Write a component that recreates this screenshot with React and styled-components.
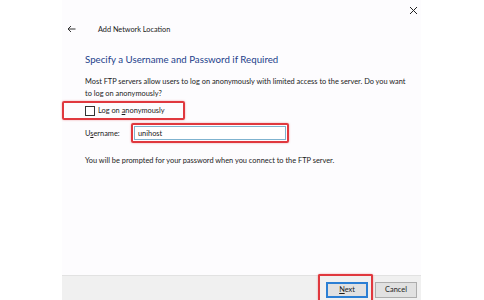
import React from 'react';
import styled, { createGlobalStyle } from 'styled-components';

const GlobalStyle = createGlobalStyle`
  html, body {
    margin: 0;
    padding: 0;
    background: #ffffff;
  }
  body {
    font-family: Lato, "Open Sans", "Liberation Sans", sans-serif;
    color: #1b1b1b;
  }
`;

const Page = styled.div`
  width: 484px;
  height: 300px;
  display: flex;
  padding-left: 62px;
  box-sizing: border-box;
  overflow: hidden;
`;

const Dialog = styled.div`
  width: 359px;
  height: 300px;
  background: #fdfcfe;
  display: flex;
  flex-direction: column;
`;

const TitleBar = styled.div`
  height: 20px;
  display: flex;
  justify-content: flex-end;
  align-items: center;
`;

const IconButton = styled.button`
  width: 16px;
  height: 16px;
  padding: 0;
  border: none;
  background: transparent;
  display: flex;
  align-items: center;
  justify-content: center;
`;

const Header = styled.div`
  height: 18px;
  display: flex;
  align-items: center;
  padding-left: 5px;
  gap: 22px;
  font-size: 7.3px;
  color: #222;
`;

const Content = styled.div`
  flex: 1;
  display: flex;
  flex-direction: column;
`;

const Heading = styled.h1`
  margin: 14px 0 0 23px;
  font-size: 9.7px;
  font-weight: 400;
  color: #233e8b;
  line-height: 14px;
`;

const Text = styled.p`
  margin: ${p => p.$top || 0}px 0 0 23px;
  font-size: 7.4px;
  line-height: 12px;
  width: 322px;
`;

const Highlight = styled.div`
  border: 2px solid #e0383e;
  border-radius: 2px;
  box-shadow: 0 0 2px rgba(224, 56, 62, 0.5);
  box-sizing: border-box;
`;

const CheckHighlight = styled(Highlight)`
  margin-top: 1px;
  width: 123px;
  height: 19px;
  display: flex;
  align-items: center;
  padding-left: 21px;
  gap: 3px;
  font-size: 7.4px;
`;

const Box = styled.span`
  width: 8px;
  height: 8px;
  border: 1px solid #333;
  background: #fff;
`;

const FieldRow = styled.div`
  margin: 3px 0 0 23px;
  display: flex;
  align-items: center;
  font-size: 7.4px;
`;

const Label = styled.span`
  width: 46px;
`;

const InputHighlight = styled(Highlight)`
  padding: 1px;
  display: flex;
`;

const Input = styled.div`
  width: 152px;
  height: 14px;
  box-sizing: border-box;
  border: 1px solid #7fb3cf;
  background: #fff;
  display: flex;
  align-items: center;
  padding-left: 3px;
  font-size: 7.4px;
`;

const Footer = styled.div`
  height: 25px;
  box-sizing: border-box;
  background: #f0f0f0;
  border-top: 1px solid #e2e2e2;
  display: flex;
  justify-content: flex-end;
  align-items: flex-end;
  padding-right: 4px;
  gap: 2px;
`;

const NextHighlight = styled(Highlight)`
  height: 26px;
  padding: 6px 3px 0 6px;
  display: flex;
  align-items: flex-start;
  border-bottom: none;
  border-radius: 2px 2px 0 0;
`;

const Button = styled.button`
  width: 42px;
  height: 16px;
  padding: 0;
  font-family: inherit;
  font-size: 7.4px;
  color: #1b1b1b;
  background: #e1e1e1;
  border: 1px solid ${p => (p.$primary ? '#2b7fd4' : '#adadad')};
  box-shadow: ${p => (p.$primary ? 'inset 0 0 0 1px #2b7fd4' : 'none')};
  line-height: 12px;
  margin-bottom: ${p => (p.$primary ? '0' : '2px')};
`;

const U = styled.span`
  text-decoration: underline;
`;

const CloseIcon = () => (
  <svg width="9" height="9" viewBox="0 0 9 9">
    <path d="M1 1 L8 8 M8 1 L1 8" stroke="#222" strokeWidth="1" />
  </svg>
);

const BackIcon = () => (
  <svg width="9" height="8" viewBox="0 0 9 8">
    <path d="M8.5 4 H1 M4 1 L1 4 L4 7" stroke="#333" strokeWidth="1" fill="none" />
  </svg>
);

export default function App() {
  return (
    <>
      <GlobalStyle />
      <Page>
        <Dialog>
          <TitleBar>
            <IconButton aria-label="Close"><CloseIcon /></IconButton>
          </TitleBar>
          <Header>
            <BackIcon />
            <span>Add Network Location</span>
          </Header>
          <Content>
            <Heading>Specify a Username and Password if Required</Heading>
            <Text $top={10}>
              Most FTP servers allow users to log on anonymously with limited access to the server. Do you want
              to log on anonymously?
            </Text>
            <CheckHighlight>
              <Box />
              <span>Log on <U>a</U>nonymously</span>
            </CheckHighlight>
            <FieldRow>
              <Label>U<U>s</U>ername:</Label>
              <InputHighlight>
                <Input>unihost</Input>
              </InputHighlight>
            </FieldRow>
            <Text $top={12}>You will be prompted for your password when you connect to the FTP server.</Text>
          </Content>
          <Footer>
            <NextHighlight>
              <Button $primary><U>N</U>ext</Button>
            </NextHighlight>
            <Button>Cancel</Button>
          </Footer>
        </Dialog>
      </Page>
    </>
  );
}
